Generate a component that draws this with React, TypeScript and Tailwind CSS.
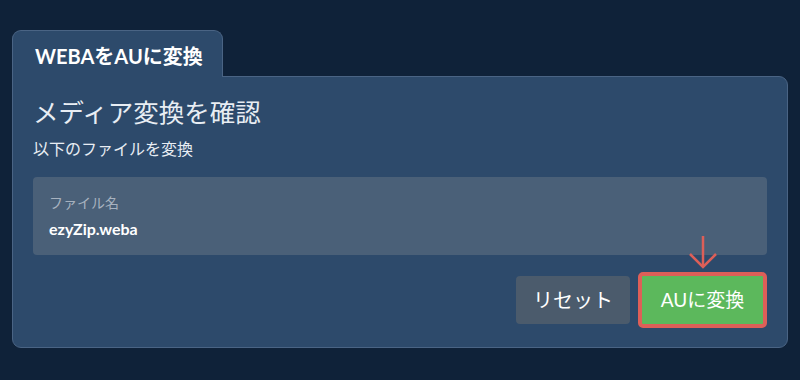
export default function App() {
  return (
    <div
      className="w-[800px] h-[380px] bg-[#0f2239] pt-[30px] px-[12px] overflow-hidden"
      style={{ fontFamily: 'Lato, "Noto Sans CJK JP", sans-serif' }}
    >
      <div className="flex">
        <div className="w-[211px] h-[47px] -mb-px relative z-10 bg-[#2d4a6b] border border-b-0 border-[#4a6484] rounded-t-[9px] pl-[22px] pt-[11px] text-[20px] leading-[28px] font-bold text-white">
          WEBAをAUに変換
        </div>
      </div>
      <div className="w-[776px] h-[272px] bg-[#2d4a6b] border border-[#4a6484] rounded-b-[9px] rounded-tr-[9px] px-[20px] pt-[18px]">
        <h1 className="text-[25.5px] leading-[34px] text-[#e8edf3]">メディア変換を確認</h1>
        <p className="mt-[10px] text-[16px] leading-[20px] text-[#e8edf3]">以下のファイルを変換</p>
        <div className="mt-[18px] h-[78px] bg-[#4a6078] rounded-[4px] px-[16px] pt-[16px]">
          <div className="text-[14px] leading-[20px] text-[#a7b2bf]">ファイル名</div>
          <div className="mt-[5px] text-[16px] leading-[22px] font-bold text-white">ezyZip.weba</div>
        </div>
        <div className="flex justify-end items-center gap-[8px] mt-[17px]">
          <button className="w-[114px] h-[48px] rounded-[4px] bg-[#4b5b6c] text-[20px] text-white">
            リセット
          </button>
          <div className="relative">
            <svg
              className="absolute left-1/2 -translate-x-1/2 -top-[38px]"
              width="30"
              height="36"
              viewBox="0 0 30 36"
              fill="none"
              stroke="#dd5f58"
              strokeWidth="2.5"
            >
              <path d="M15 2 V33" />
              <path d="M2 20 L15 33 L28 20" />
            </svg>
            <button className="w-[129px] h-[56px] rounded-[5px] border-[4px] border-[#dd5f58] bg-[#5cb85c] text-[19px] text-white">
              AUに変換
            </button>
          </div>
        </div>
      </div>
    </div>
  );
}
